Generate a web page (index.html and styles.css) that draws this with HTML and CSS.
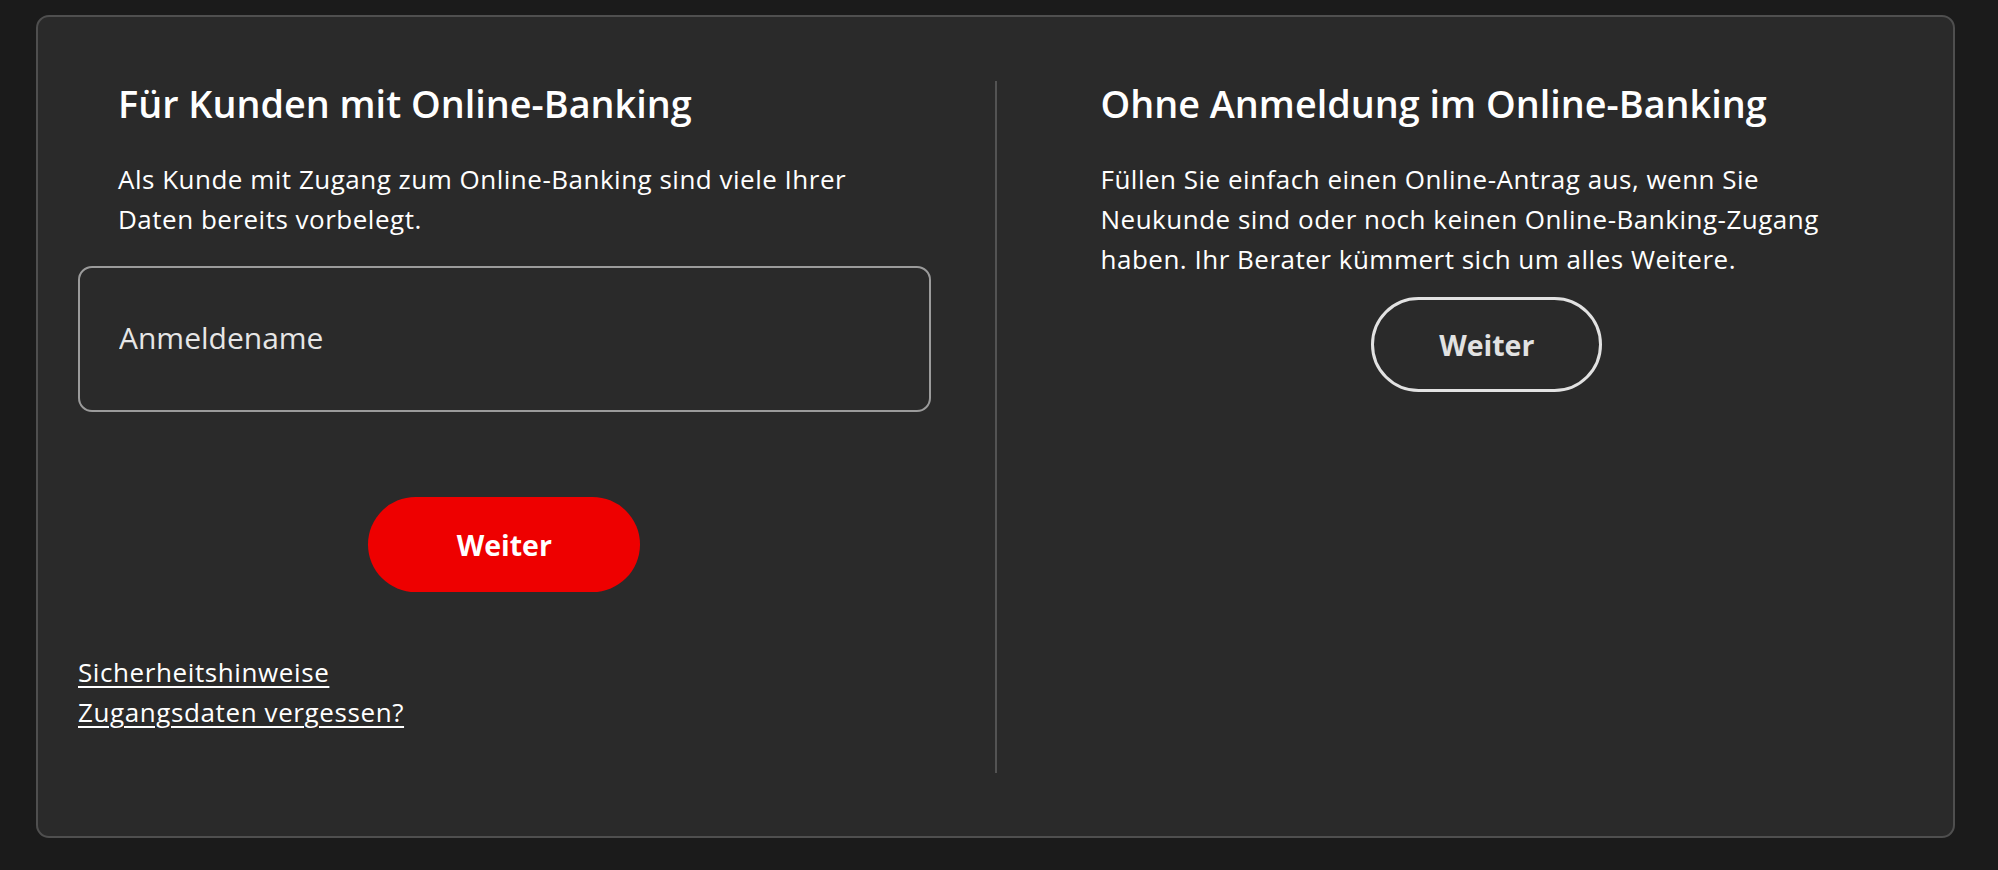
FILE: index.html
```html
<!DOCTYPE html>
<html lang="de">
<head>
<meta charset="utf-8">
<title>Anmeldung</title>
<link rel="stylesheet" href="styles.css">
</head>
<body>
<main class="card">
  <section class="col col-left">
    <h2 class="title">Für Kunden mit Online-Banking</h2>
    <p class="text">Als Kunde mit Zugang zum Online-Banking sind viele Ihrer Daten bereits vorbelegt.</p>
    <input class="field" type="text" placeholder="Anmeldename">
    <div class="btn-row btn-row-primary">
      <button class="btn btn-primary" type="button">Weiter</button>
    </div>
    <div class="links">
      <a class="link" href="#">Sicherheitshinweise</a>
      <a class="link" href="#">Zugangsdaten vergessen?</a>
    </div>
  </section>
  <div class="divider"></div>
  <section class="col col-right">
    <h2 class="title">Ohne Anmeldung im Online-Banking</h2>
    <p class="text text-narrow">Füllen Sie einfach einen Online-Antrag aus, wenn Sie Neukunde sind oder noch keinen Online-Banking-Zugang haben. Ihr Berater kümmert sich um alles Weitere.</p>
    <div class="btn-row btn-row-secondary">
      <button class="btn btn-secondary" type="button">Weiter</button>
    </div>
  </section>
</main>
</body>
</html>
```
FILE: styles.css
```css
* { box-sizing: border-box; }

html, body {
  margin: 0;
  background: #1b1b1b;
}

body {
  padding: 15px 43px 0 36px;
  font-family: "Open Sans", "Noto Sans", sans-serif;
  color: #ffffff;
}

.card {
  display: grid;
  grid-template-columns: 1fr 2px 1fr;
  column-gap: 64px;
  width: 1919px;
  height: 823px;
  padding: 63px 40px 63px 40px;
  background: #2a2a2a;
  border: 2px solid #4f4f4f;
  border-radius: 13px;
}

.col {
  display: flex;
  flex-direction: column;
  min-width: 0;
}

.divider {
  margin-top: 1px;
  background: #535353;
}

.title {
  margin: 0;
  padding: 0 40px;
  font-size: 37.8px;
  line-height: 48px;
  font-weight: 600;
  letter-spacing: 0;
}

.text {
  margin: 31px 0 0;
  padding: 0 40px;
  font-size: 26px;
  line-height: 40px;
  letter-spacing: 0.5px;
}

.text-narrow {
  max-width: 810px;
}

.field {
  display: block;
  width: 100%;
  height: 146px;
  margin-top: 27px;
  padding: 0 39px 3px;
  background: transparent;
  border: 2px solid #9b9b9b;
  border-radius: 14px;
  font-family: inherit;
  font-size: 30px;
  color: #e6e6e6;
  outline: none;
}

.field::placeholder {
  color: #e6e6e6;
  opacity: 1;
}

.btn-row {
  display: flex;
  justify-content: center;
}

.btn-row-primary { margin-top: 85px; }
.btn-row-secondary { margin-top: 18px; }

.btn {
  height: 95px;
  border-radius: 48px;
  font-family: inherit;
  font-size: 28.5px;
  font-weight: 700;
  cursor: pointer;
}

.btn-primary {
  width: 272px;
  background: #ee0000;
  border: none;
  color: #ffffff;
}

.btn-secondary {
  width: 231px;
  background: transparent;
  border: 3px solid #e2e2e2;
  color: #e2e2e2;
}

.links {
  display: flex;
  flex-direction: column;
  align-items: flex-start;
  margin-top: 60px;
}

.link {
  font-size: 26px;
  line-height: 40px;
  letter-spacing: 0.6px;
  color: #ffffff;
  text-decoration: underline;
  text-decoration-thickness: 2px;
  text-underline-offset: 4px;
}
```
